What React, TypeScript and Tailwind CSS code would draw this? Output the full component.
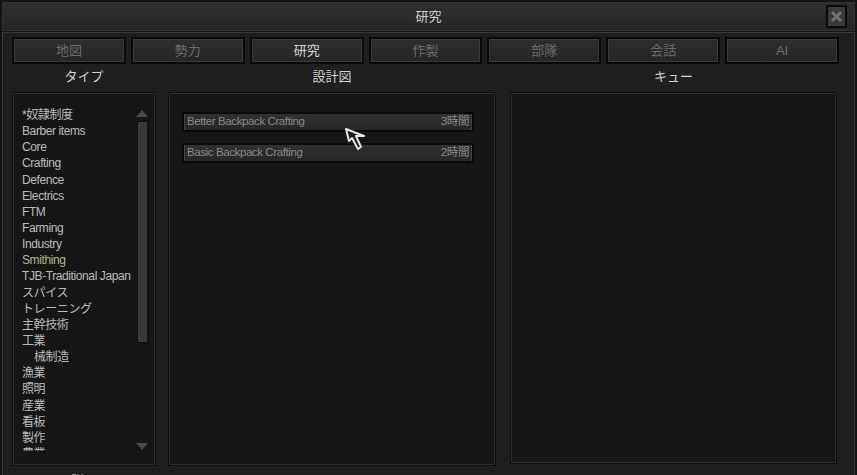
import React from "react";

const tabs = ["地図", "勢力", "研究", "作製", "部隊", "会話", "AI"];

const types: { label: string; indent?: boolean; active?: boolean }[] = [
  { label: "*奴隷制度" },
  { label: "Barber items" },
  { label: "Core" },
  { label: "Crafting" },
  { label: "Defence" },
  { label: "Electrics" },
  { label: "FTM" },
  { label: "Farming" },
  { label: "Industry" },
  { label: "Smithing", active: true },
  { label: "TJB-Traditional Japan" },
  { label: "スパイス" },
  { label: "トレーニング" },
  { label: "主幹技術" },
  { label: "工業" },
  { label: "械制造", indent: true },
  { label: "漁業" },
  { label: "照明" },
  { label: "産業" },
  { label: "看板" },
  { label: "製作" },
  { label: "農業" },
];

const blueprints = [
  { name: "Better Backpack Crafting", time: "3時間" },
  { name: "Basic Backpack Crafting", time: "2時間" },
];

const font = "font-['Liberation_Sans','Noto_Sans_CJK_JP',sans-serif]";

function Cursor() {
  return (
    <svg
      className="absolute left-[344px] top-[127px]"
      width="24"
      height="25"
      viewBox="0 0 24 25"
    >
      <path
        d="M2 2 L5 14 L8 11 L14 22 L17 20 L12 9 L20 9 Z"
        fill="#1c1c1c"
        stroke="#e8e8e8"
        strokeWidth="2"
        strokeLinejoin="round"
      />
    </svg>
  );
}

function Panel({
  className,
  children,
}: {
  className?: string;
  children?: React.ReactNode;
}) {
  return (
    <div
      className={`border border-[#0e0e0e] shadow-[inset_0_0_0_1px_#2e2e2e] bg-[#161616] ${className ?? ""}`}
    >
      {children}
    </div>
  );
}

export default function App() {
  return (
    <div
      className={`relative w-[857px] h-[475px] overflow-hidden bg-[#141414] ${font}`}
    >
      {/* title bar */}
      <div className="relative mx-[2px] mt-[2px] h-[29px] border border-[#333] bg-gradient-to-b from-[#2f2f2f] to-[#262626] flex items-center justify-center">
        <span className="text-[13px] text-[#cfcfcf]">研究</span>
        <div className="absolute right-[7px] top-[2px] w-[21px] h-[23px] border-2 border-[#0a0a0a] bg-[#3a3a3a] flex items-center justify-center">
          <svg width="13" height="13" viewBox="0 0 13 13">
            <path
              d="M2 2 L11 11 M11 2 L2 11"
              stroke="#727272"
              strokeWidth="3"
            />
          </svg>
        </div>
      </div>

      {/* main frame */}
      <div className="mx-[2px] mt-[1px] h-[450px] border-t border-l border-r border-[#3a3a3a] bg-[#1f1f1f] pl-[9px] pt-[4px]">
        <div className="w-[827px] grid grid-cols-7 gap-[5px]">
          {tabs.map((t) => (
            <div
              key={t}
              className="h-[27px] border-2 border-[#0a0a0a] bg-[#0a0a0a]"
            >
              <div className="h-full border border-[#3a3a3a] bg-gradient-to-b from-[#2d2d2d] to-[#262626] flex items-center justify-center">
                <span
                  className={`text-[13px] ${t === "研究" ? "text-[#d6d6d6]" : "text-[#6c6c6c]"}`}
                >
                  {t}
                </span>
              </div>
            </div>
          ))}
        </div>

        {/* headings */}
        <div className="flex w-[827px] mt-[2px] h-[22px] items-center text-[13px] text-[#d2d2d2]">
          <div className="w-[144px] text-center">タイプ</div>
          <div className="w-[328px] ml-[12px] text-center">設計図</div>
          <div className="w-[327px] ml-[14px] text-center">キュー</div>
        </div>

        {/* panels */}
        <div className="flex mt-[4px] w-[827px]">
          <Panel className="w-[144px] h-[374px] relative">
            <div className="h-[358px] overflow-hidden pl-[9px] pt-[14px]">
              {types.map((t) => (
                <div
                  key={t.label}
                  className={`h-[16.15px] leading-[16px] text-[12px] tracking-[-0.4px] whitespace-nowrap ${t.indent ? "pl-[12px]" : ""} ${t.active ? "text-[#b6b97c]" : "text-[#bcbcbc]"}`}
                >
                  {t.label}
                </div>
              ))}
            </div>
            {/* scrollbar */}
            <div className="absolute left-[123px] top-[17px] w-[12px] flex flex-col items-center">
              <div className="w-0 h-0 border-l-[6px] border-r-[6px] border-b-[7px] border-l-transparent border-r-transparent border-b-[#4a4a4a]" />
              <div className="mt-[4px] w-[11px] h-[222px] border border-[#111] bg-[#3a3a3a]" />
              <div className="mt-[100px] w-0 h-0 border-l-[6px] border-r-[6px] border-t-[7px] border-l-transparent border-r-transparent border-t-[#4a4a4a]" />
            </div>
          </Panel>

          <Panel className="w-[328px] h-[374px] ml-[12px] pl-[13px] pt-[19px]">
            <div className="flex flex-col gap-[11px]">
              {blueprints.map((b) => (
                <div
                  key={b.name}
                  className="w-[292px] h-[20px] border-2 border-[#0a0a0a] bg-[#0a0a0a]"
                >
                  <div className="h-full border-l border-r border-[#444] bg-gradient-to-b from-[#303030] to-[#272727] flex items-center justify-between px-[2px] text-[11.5px] tracking-[-0.4px] text-[#8a8a8a]">
                    <span>{b.name}</span>
                    <span>{b.time}</span>
                  </div>
                </div>
              ))}
            </div>
          </Panel>

          <Panel className="w-[327px] h-[372px] ml-[14px]" />
        </div>

        <div className="w-[144px] text-center mt-[5px] text-[13px] text-[#bdbdbd]">
          説明
        </div>
      </div>

      <Cursor />
    </div>
  );
}
